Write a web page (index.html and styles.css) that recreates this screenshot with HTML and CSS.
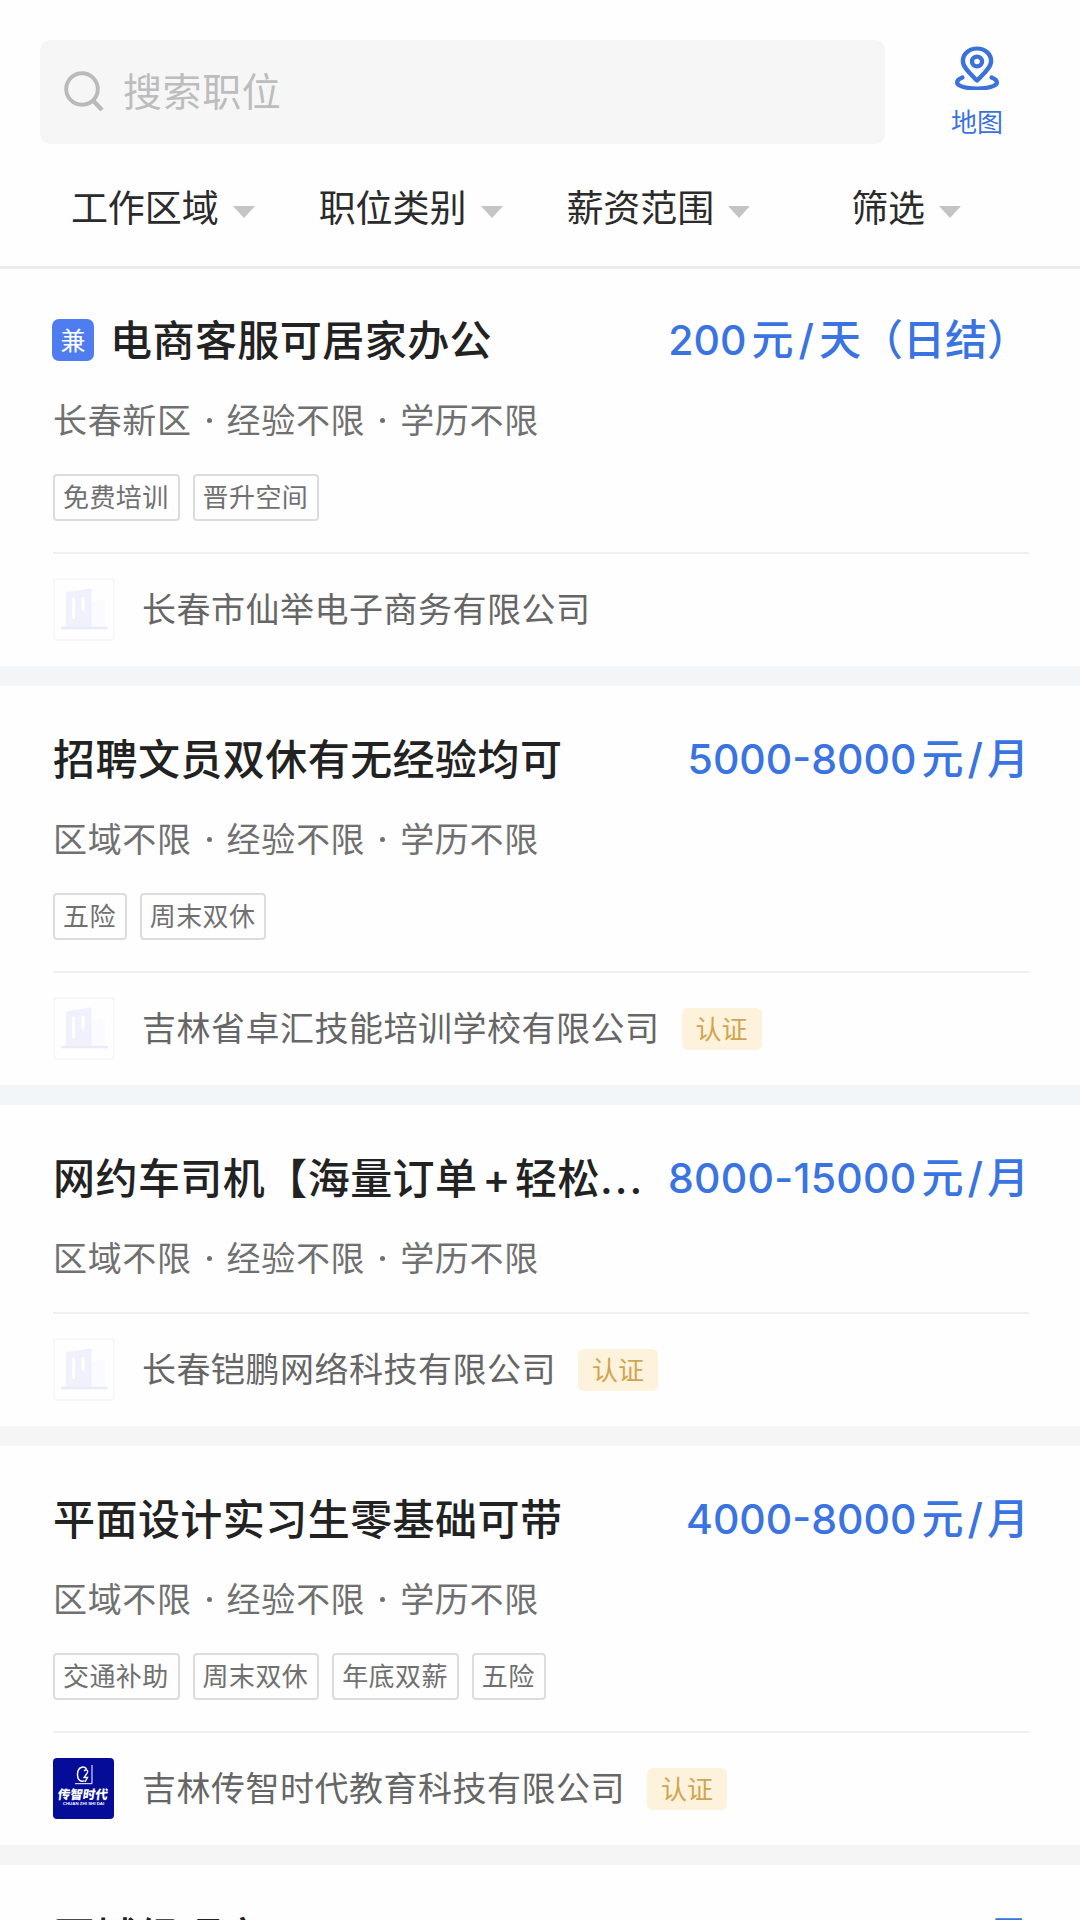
FILE: index.html
```html
<!DOCTYPE html>
<html lang="zh-CN">
<head>
<meta charset="utf-8">
<title>职位列表</title>
<link rel="stylesheet" href="styles.css">
</head>
<body>
<svg class="defs" aria-hidden="true">
  <symbol id="building" viewBox="0 0 60 62">
    <path fill="#fafbfe" d="M38 24l9-4 5 3v27H38z"/>
    <path fill="#eff2fc" d="M11 15q0-2 2-2.500L36 9q2 0 2 2v39H11z"/>
    <path stroke="#fff" stroke-width="3" stroke-linecap="round" d="M19 20v20M29 19v12"/>
    <path stroke="#e9ecf8" stroke-width="2.500" stroke-linecap="round" d="M7 50.500h47"/>
  </symbol>
</svg>
<header class="header">
  <div class="top">
    <div class="search">
      <svg class="search-icon" viewBox="0 0 40 42" fill="none" stroke="#bababa" stroke-width="3.900"><circle cx="18" cy="18" r="15.800"/><path d="M29 29.500l9 9.500" stroke-width="4.500"/></svg>
      <span class="placeholder">搜索职位</span>
    </div>
    <div class="map">
      <svg class="map-icon" viewBox="0 0 44 44" preserveAspectRatio="none" fill="none" stroke="#3a72dc" stroke-width="4.200" stroke-linecap="round" stroke-linejoin="round"><path d="M22 34.500C17 29 8.500 22 8.500 15a13.500 12.500 0 0 1 27 0C35.500 22 27 29 22 34.500z"/><circle cx="22" cy="15.500" r="4.800"/><path d="M8 31.500c-3.500 1.500-5 3-5 5 0 3.500 8 6 19 6s19-2.500 19-6c0-2-1.500-3.500-5-5"/></svg>
      <span class="map-label">地图</span>
    </div>
  </div>
  <nav class="filters">
    <div class="filter">工作区域<i class="caret"></i></div>
    <div class="filter">职位类别<i class="caret"></i></div>
    <div class="filter">薪资范围<i class="caret"></i></div>
    <div class="filter">筛选<i class="caret"></i></div>
  </nav>
</header>
<main class="jobs">
  <article class="job">
    <div class="head"><span class="part-time">兼</span><h2 class="title">电商客服可居家办公</h2><span class="salary">200<span class="unit">元<span class="slash">/</span>天（日结）</span></span></div>
    <p class="meta"><span>长春新区</span><b class="dot"></b><span>经验不限</span><b class="dot"></b><span>学历不限</span></p>
    <div class="tags"><span class="tag">免费培训</span><span class="tag">晋升空间</span></div>
    <div class="company"><svg class="logo"><use href="#building"/></svg><span class="name">长春市仙举电子商务有限公司</span></div>
  </article>
  <article class="job">
    <div class="head"><h2 class="title">招聘文员双休有无经验均可</h2><span class="salary">5000-8000<span class="unit">元<span class="slash">/</span>月</span></span></div>
    <p class="meta"><span>区域不限</span><b class="dot"></b><span>经验不限</span><b class="dot"></b><span>学历不限</span></p>
    <div class="tags"><span class="tag">五险</span><span class="tag">周末双休</span></div>
    <div class="company"><svg class="logo"><use href="#building"/></svg><span class="name">吉林省卓汇技能培训学校有限公司</span><span class="verified">认证</span></div>
  </article>
  <article class="job plain">
    <div class="head"><h2 class="title">网约车司机【海量订单<span class="plus">+</span>轻松<span class="more">...</span></h2><span class="salary wide">8000-15000<span class="unit">元<span class="slash">/</span>月</span></span></div>
    <p class="meta"><span>区域不限</span><b class="dot"></b><span>经验不限</span><b class="dot"></b><span>学历不限</span></p>
    <div class="company"><svg class="logo"><use href="#building"/></svg><span class="name">长春铠鹏网络科技有限公司</span><span class="verified">认证</span></div>
  </article>
  <article class="job plain">
    <div class="head"><h2 class="title">平面设计实习生零基础可带</h2><span class="salary">4000-8000<span class="unit">元<span class="slash">/</span>月</span></span></div>
    <p class="meta"><span>区域不限</span><b class="dot"></b><span>经验不限</span><b class="dot"></b><span>学历不限</span></p>
    <div class="tags"><span class="tag">交通补助</span><span class="tag">周末双休</span><span class="tag">年底双薪</span><span class="tag">五险</span></div>
    <div class="company">
      <div class="brand">
        <svg class="brand-mark" viewBox="0 0 20 20" fill="none" stroke="#fff"><path d="M12.500 4.500C11.500 1 4 .5 3.500 9c-.3 6.500 4 8.500 7 6.500" stroke-width="1.500"/><path d="M10 6c3-2.500 5 0 2.500 3L10 12.500h3.500L11 17" stroke-width="1.300"/><path d="M18 0v18.700H1" stroke-width="1"/></svg>
        <span class="brand-name">传智时代</span>
        <span class="brand-sub">CHUAN ZHI SHI DAI</span>
      </div>
      <span class="name">吉林传智时代教育科技有限公司</span><span class="verified">认证</span></div>
  </article>
  <article class="job last">
    <div class="head"><h2 class="title">区域经理市</h2><span class="salary"><span class="unit">月</span></span></div>
  </article>
</main>
</body>
</html>
```
FILE: styles.css
```css
* { box-sizing: border-box; }
body {
  margin: 0;
  width: 1080px;
  height: 1920px;
  overflow: hidden;
  background: #fefefe;
  font-family: "Noto Sans CJK SC", sans-serif;
  color: #222;
}
.defs { display: block; width: 0; height: 0; }

.header {
  height: 269px;
  padding-top: 40px;
  border-bottom: 3px solid #ebebeb;
}
.top { display: flex; padding-left: 40px; height: 104px; }
.search {
  display: flex;
  align-items: center;
  width: 845px;
  height: 104px;
  padding-left: 24px;
  border-radius: 10px;
  background: #f6f6f6;
}
.search-icon { width: 40px; height: 42px; }
.placeholder {
  margin-left: 19px;
  padding-bottom: 5px;
  font-size: 39px;
  letter-spacing: .6px;
  line-height: 99px;
  color: #bdbdbd;
}
.map {
  display: flex;
  flex-direction: column;
  align-items: center;
  width: 184px;
  padding-top: 6px;
}
.map-icon { width: 46px; height: 44px; }
.map-label {
  margin-top: 13px;
  font-size: 26px;
  line-height: 36px;
  color: #3a72dc;
}
.filters {
  display: grid;
  grid-template-columns: repeat(4, 1fr);
  height: 122px;
  padding: 40px 50px 0 39px;
}
.filter {
  display: flex;
  justify-content: center;
  font-size: 37px;
  line-height: 44px;
  height: 44px;
  color: #2b2b2b;
}
.caret {
  width: 0;
  height: 0;
  margin: 22px 0 0 14px;
  border: 11px solid transparent;
  border-top: 12px solid #c4c4c4;
  border-bottom: 0;
}

.job {
  padding: 52px 51px 25px 53px;
  border-bottom: 20px solid #f3f6f9;
}
.job:first-child { padding-top: 50px; }
.job.plain { border-bottom-color: #f5f5f5; }
.job.last { padding-top: 51px; }
.head { display: flex; align-items: center; height: 42px; }
.part-time {
  width: 42px;
  height: 42px;
  margin: 0 16px 0 -1px;
  border-radius: 7px;
  background: #4f7df0;
  color: #fff;
  font-size: 25px;
  line-height: 40px;
  text-align: center;
}
.title {
  margin: 0;
  padding-bottom: 5px;
  font-size: 42px;
  font-weight: 500;
  letter-spacing: .45px;
  line-height: 42px;
  white-space: nowrap;
}
.plus, .more { font-family: Inter, sans-serif; line-height: 0; }
.plus { margin: 0 4px 0 5px; }
.more { letter-spacing: 2px; }
.salary {
  margin-left: auto;
  font-family: Inter, "Noto Sans CJK SC", sans-serif;
  font-size: 41px;
  font-weight: 500;
  line-height: 42px;
  white-space: nowrap;
  color: #3a74e2;
}
.salary.wide { letter-spacing: .25px; }
.unit { margin-left: 5px; font-size: 42px; letter-spacing: 0; }
.slash { margin: 0 4px; }
.job:first-child .slash { margin: 0 5px; }
.meta {
  display: flex;
  align-items: center;
  margin: 40px 0 37px;
  font-size: 34px;
  letter-spacing: .65px;
  line-height: 36px;
  color: #707070;
}
.dot {
  width: 5px;
  height: 5px;
  margin: 2px 15px 0;
  border-radius: 50%;
  background: #707070;
}
.tags {
  display: flex;
  gap: 13px;
  height: 47px;
  margin-bottom: 31px;
}
.tag {
  padding: 0 9px 0 8px;
  border: 2px solid #dcdcdc;
  border-radius: 4px;
  font-size: 26px;
  letter-spacing: .4px;
  line-height: 40px;
  color: #707070;
}
.company {
  display: flex;
  align-items: center;
  height: 89px;
  padding-top: 24px;
  border-top: 2px solid #f0f0f0;
}
.logo, .brand { flex: none; width: 62px; height: 63px; border-radius: 4px; }
.logo { border: 2px solid #f7f7f9; }
.brand {
  display: flex;
  flex-direction: column;
  align-items: center;
  width: 61px;
  height: 61px;
  margin-right: 1px;
  padding-top: 7px;
  background: #040c98;
  color: #fff;
}
.brand-mark { width: 20px; height: 20px; }
.brand-name {
  margin-top: 2px;
  font-size: 12.5px;
  font-weight: 900;
  line-height: 14px;
  transform: skewX(-8deg);
}
.brand-sub {
  font: 700 4.4px/5px "Liberation Sans", sans-serif;
  white-space: nowrap;
}
.name {
  margin-left: 27px;
  padding-bottom: 3px;
  font-size: 34px;
  letter-spacing: .5px;
  line-height: 40px;
  color: #666;
}
.verified {
  width: 80px;
  height: 42px;
  margin-left: 22px;
  border-radius: 6px;
  background: #fdf2db;
  color: #d0a550;
  font-size: 26px;
  line-height: 40px;
  text-align: center;
}
```
